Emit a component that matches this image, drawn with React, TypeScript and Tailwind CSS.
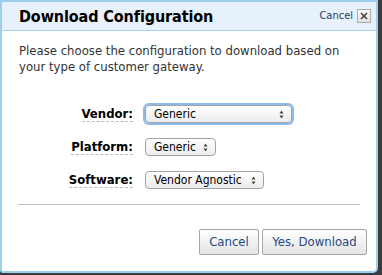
function Arrows() {
  return (
    <svg width="5" height="9" viewBox="0 0 5 9" className="shrink-0">
      <path d="M2.5 0.5 L4.5 3.5 L0.5 3.5 Z" fill="#444" />
      <path d="M2.5 8.5 L4.5 5.5 L0.5 5.5 Z" fill="#444" />
    </svg>
  );
}

function Select({ value, width, focused }: { value: string; width: string; focused?: boolean }) {
  return (
    <div
      className={
        "flex items-center justify-between h-[18px] pl-[8px] pr-[7px] rounded-[4px] border border-[#a3a3a3] bg-gradient-to-b from-white to-[#ececec] text-[12px] text-black leading-none " +
        width +
        (focused ? " shadow-[0_0_0_2px_#8ab9ea]" : "")
      }
    >
      <span>{value}</span>
      <Arrows />
    </div>
  );
}

function Row({ label, children }: { label: string; children: React.ReactNode }) {
  return (
    <div className="flex items-center">
      <div className="w-[133px] flex justify-end">
        <span className="font-bold text-[13px] text-black border-b border-dashed border-[#bbb] leading-[15px]">
          {label}
        </span>
      </div>
      <div className="ml-[12px]">{children}</div>
    </div>
  );
}

export default function App() {
  return (
    <div className="w-[382px] h-[275px] bg-[#3b3b3b] font-['DejaVu_Sans_Condensed','DejaVu_Sans',sans-serif]">
      <div className="w-[378px] h-[273px] bg-white border-2 border-[#9ccfee] rounded-br-[5px] rounded-bl-[3px] flex flex-col overflow-hidden">
        <div className="h-[29px] shrink-0 bg-[#e6f1fb] border-b border-[#a7d3f1] flex items-center justify-between pl-[17px] pr-[5px]">
          <h1 className="text-[16px] font-bold text-black tracking-[-0.1px] pt-[2px]">Download Configuration</h1>
          <div className="flex items-center gap-[4px]">
            <span className="text-[11px] text-[#1d3b66]">Cancel</span>
            <span className="w-[14px] h-[14px] border border-[#aaa] bg-gradient-to-b from-[#fafafa] to-[#e2e2e2] flex items-center justify-center">
              <svg width="8" height="8" viewBox="0 0 8 8">
                <path d="M1 1 L7 7 M7 1 L1 7" stroke="#444" strokeWidth="1.6" />
              </svg>
            </span>
          </div>
        </div>
        <p className="px-[17px] pt-[12px] text-[13px] leading-[16px] text-[#333]">
          Please choose the configuration to download based on your type of customer gateway.
        </p>
        <div className="flex flex-col gap-[15px] mt-[30px] ml-[-2px]">
          <Row label="Vendor:">
            <Select value="Generic" width="w-[147px]" focused />
          </Row>
          <Row label="Platform:">
            <Select value="Generic" width="w-[71px]" />
          </Row>
          <Row label="Software:">
            <Select value="Vendor Agnostic" width="w-[119px]" />
          </Row>
        </div>
        <div className="mx-[16px] mt-[15px] border-t border-[#bdbdbd]" />
        <div className="flex justify-end gap-[3px] pr-[9px] mt-[24px]">
          <button className="h-[26px] w-[60px] border border-[#a6a6a6] rounded-[2px] bg-gradient-to-b from-white to-[#e4e4e4] text-[13px] text-[#1f4a85]">
            Cancel
          </button>
          <button className="h-[26px] w-[105px] border border-[#a6a6a6] rounded-[2px] bg-gradient-to-b from-white to-[#e4e4e4] text-[13px] text-[#1f4a85]">
            Yes, Download
          </button>
        </div>
      </div>
    </div>
  );
}
